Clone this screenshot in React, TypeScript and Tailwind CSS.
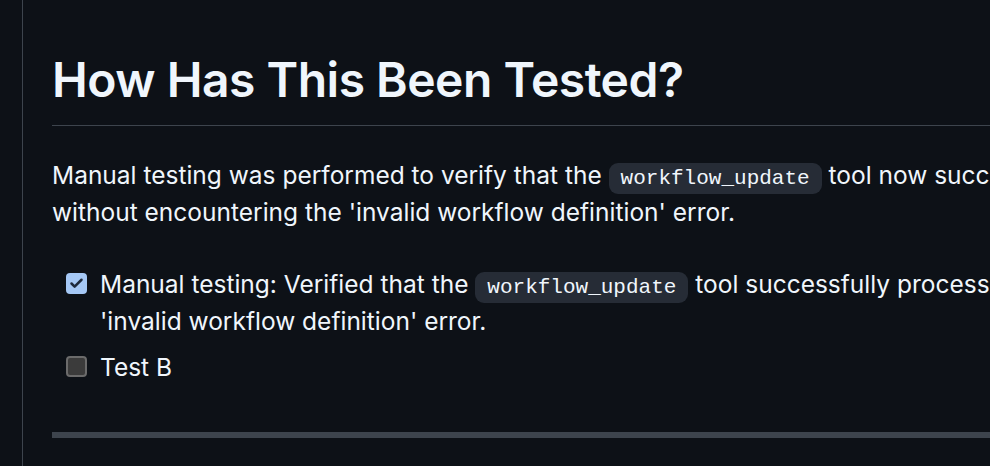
import { Check } from 'lucide-react';

function Code({ children }: { children: string }) {
  return (
    <code className="rounded-[9px] bg-[#262c36] px-[12px] py-[4px] font-['Liberation_Mono',monospace] text-[21px] leading-none text-[#f0f6fc]">
      {children}
    </code>
  );
}

function TaskCheckbox({ checked }: { checked: boolean }) {
  return checked ? (
    <span className="mt-[7px] mr-[13px] flex h-[21px] w-[21px] shrink-0 items-center justify-center rounded-[4px] bg-[#a5c8f5]">
      <Check className="h-[15px] w-[15px] text-[#1e2a3c]" strokeWidth={4} />
    </span>
  ) : (
    <span className="mt-[7px] mr-[13px] h-[21px] w-[21px] shrink-0 rounded-[4px] border-2 border-[#6b6b6b] bg-[#3b3b3b]" />
  );
}

export default function App() {
  return (
    <div className="flex h-[466px] w-[990px] overflow-hidden bg-[#0d1117] font-['Inter',sans-serif] text-[#f0f6fc]">
      <div className="w-[23px] shrink-0 border-r border-[#3d444d]" />

      <div className="w-[1400px] shrink-0 pl-[29px]">
        <h2 className="border-b border-[#3d444d] pt-[50px] pb-[15px] text-[48px] leading-[60px] font-semibold tracking-[-0.5px]">
          How Has This Been Tested?
        </h2>

        <p className="mt-[31px] text-[24.5px] leading-[37px]">
          Manual testing was performed to verify that the <Code>workflow_update</Code> tool now successfully updates existing workflows
          <br />
          without encountering the 'invalid workflow definition' error.
        </p>

        <ul className="mt-[35px] pl-[14px] text-[24.5px] leading-[37px]">
          <li className="flex">
            <TaskCheckbox checked />
            <span>
              Manual testing: Verified that the <Code>workflow_update</Code> tool successfully processes updates without the
              <br />
              'invalid workflow definition' error.
            </span>
          </li>
          <li className="mt-[9px] flex">
            <TaskCheckbox checked={false} />
            <span>Test B</span>
          </li>
        </ul>

        <hr className="mt-[46px] h-[6px] border-0 bg-[#3d444d]" />
      </div>
    </div>
  );
}
